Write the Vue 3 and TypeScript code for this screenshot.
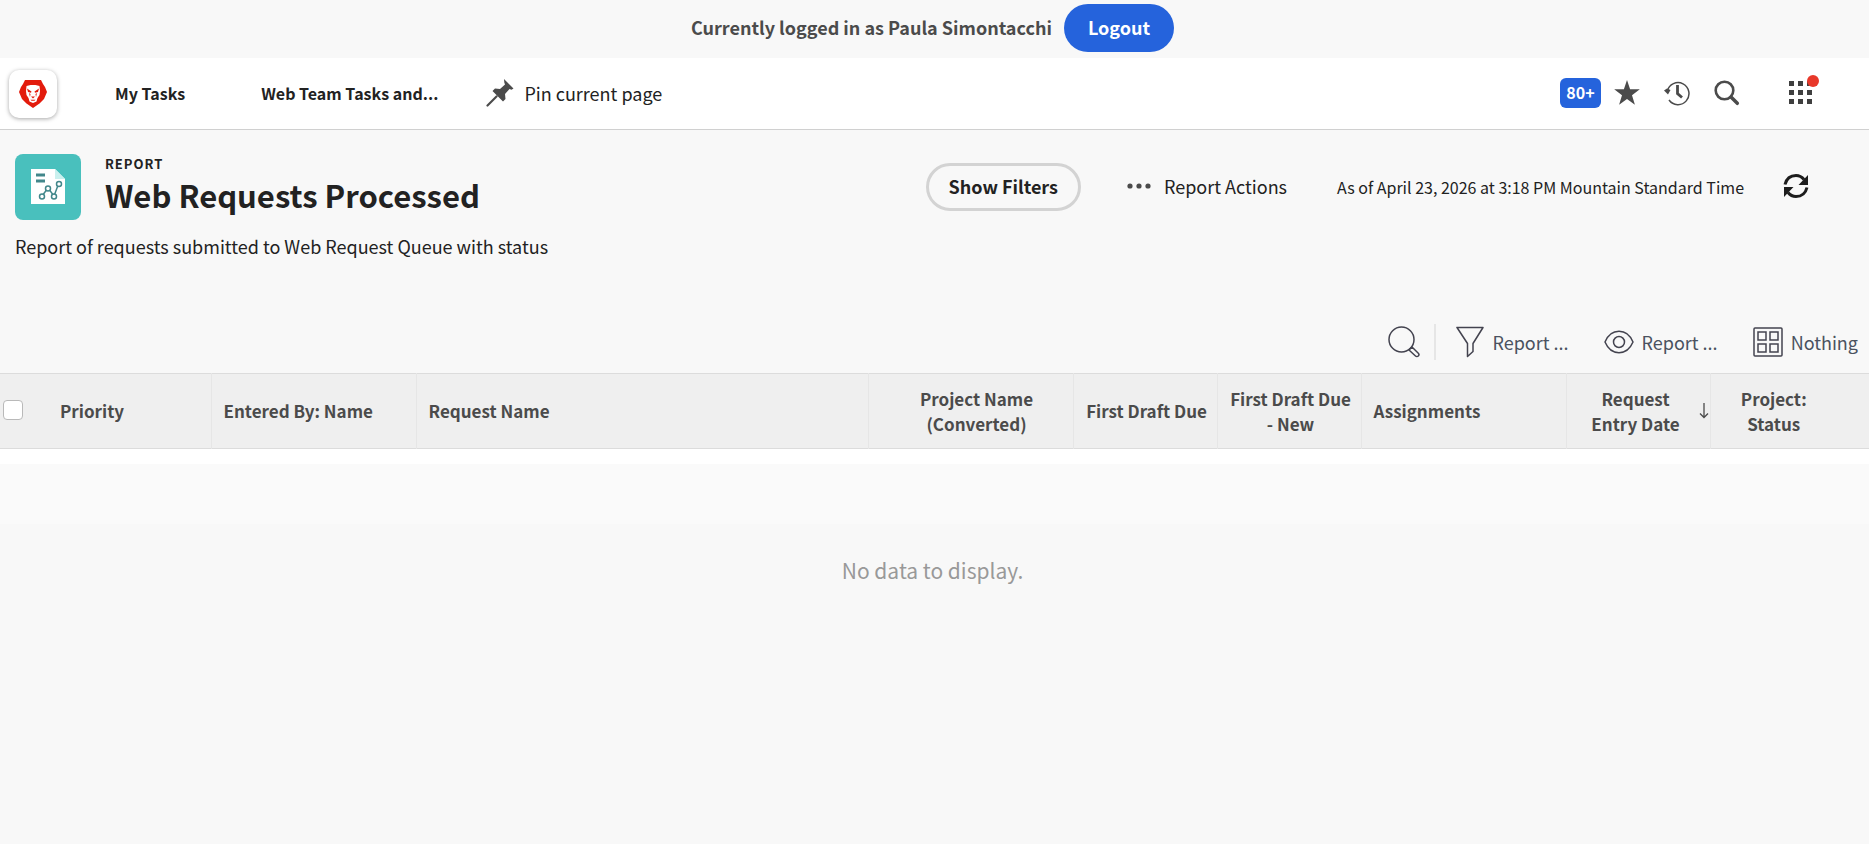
<script setup lang="ts">
interface Column {
  label: string
  align: 'left' | 'center'
  cls: string
  sorted?: boolean
}

const columns: Column[] = [
  { label: 'Priority', align: 'left', cls: 'w-priority' },
  { label: 'Entered By: Name', align: 'left', cls: 'w-wide' },
  { label: 'Request Name', align: 'left', cls: 'w-auto' },
  { label: 'Project Name (Converted)', align: 'center', cls: 'w-wide narrow-text' },
  { label: 'First Draft Due', align: 'center', cls: 'w-date' },
  { label: 'First Draft Due - New', align: 'center', cls: 'w-date' },
  { label: 'Assignments', align: 'left', cls: 'w-wide' },
  { label: 'Request Entry Date', align: 'center', cls: 'w-date w-sorted', sorted: true },
  { label: 'Project: Status', align: 'center', cls: 'w-last' },
]

const gridDots = [0, 9, 18]
</script>

<template>
  <div class="page">
    <div class="session-bar">
      <span class="session-text">Currently logged in as Paula Simontacchi</span>
      <button class="logout" type="button">Logout</button>
    </div>

    <header class="nav">
      <a class="brand" href="#" aria-label="Home">
        <svg width="28" height="28" viewBox="0 0 28 28">
          <path d="M6 0h16l2 4 2 3 2 5-3 7-4.500 4.500L14 28l-6.500-4.500L3 19l-3-7 2-5 2-3z" fill="#e31b0c" />
          <path d="M7.500 6l4-1h5l4 1 .5 5-.5 4-2 3-1 3.500L14 23l-3.500-1.500-1-3.500-2-3-.5-4z" fill="#fff" />
          <path d="M8 8.500l4.500 3-.5 1.200-3-.7zM20 8.500l-4.500 3 .5 1.200 3-.7zM12 16.500h4l-2 2zM11.500 19.800h5l-1 1h-3zM10 13l1.500 1-.5 3zM18 13l-1.500 1 .5 3z" fill="#e31b0c" />
        </svg>
      </a>
      <nav class="links">
        <a class="nav-link" href="#">My Tasks</a>
        <a class="nav-link" href="#">Web Team Tasks and...</a>
      </nav>
      <button class="pin" type="button">
        <svg width="28" height="28" viewBox="0 0 28 28">
          <path d="M18 0l9.500 9.500-2 1.200-2-.7-4.500 5 .5 5-2.500 2.500L6.500 12l2.500-2.500 5 .5 5-4.500-.7-2z" fill="#4b4b4b" />
          <path d="M10.500 17.500L1.500 26.500" stroke="#4b4b4b" stroke-width="2.200" stroke-linecap="round" />
        </svg>
        <span>Pin current page</span>
      </button>

      <div class="nav-tools">
        <button class="badge" type="button">80+</button>
        <button class="icon-btn star" type="button" aria-label="Favorites">
          <svg width="26" height="26" viewBox="0 0 26 26"><path d="M13 0l3.100 9.200 9.700.1-7.800 5.900 2.900 9.500L13 19l-7.900 5.700L8 15.200.2 9.300l9.700-.1z" fill="#4b4b4b" /></svg>
        </button>
        <button class="icon-btn clock" type="button" aria-label="Recent">
          <svg width="26" height="26" viewBox="0 0 26 26" fill="none" stroke="#4b4b4b">
            <path d="M3.300 11A11 11 0 1 1 5 20" stroke-width="1.500" />
            <path d="M0 10.500L3 8.500l3.500 1.500-2.500 4.500z" fill="#4b4b4b" stroke="none" />
            <path d="M13.500 5v8.500l4.500 4" stroke-width="2.800" />
          </svg>
        </button>
        <button class="icon-btn find" type="button" aria-label="Search">
          <svg width="26" height="26" viewBox="0 0 26 26" fill="none" stroke="#4b4b4b">
            <circle cx="10.500" cy="10.500" r="8.800" stroke-width="2.600" />
            <path d="M17 17l6.300 6.300" stroke-width="3.500" stroke-linecap="round" />
          </svg>
        </button>
        <button class="icon-btn apps" type="button" aria-label="Applications">
          <svg width="23" height="23" viewBox="0 0 23 23" fill="#3f3f3f">
            <template v-for="y in gridDots" :key="y">
              <rect v-for="x in gridDots" :key="x" :x="x" :y="y" width="5" height="5" />
            </template>
          </svg>
          <span class="dot"></span>
        </button>
      </div>
    </header>

    <section class="report-head">
      <div class="report-row">
        <div class="report-icon">
          <svg width="34" height="36" viewBox="0 0 34 36">
            <path d="M0 0h24l10 10v25H0z" fill="#fff" />
            <path d="M24 0l10 10H24z" fill="#c9f0ee" />
            <path d="M5 6h9M5 12h9" stroke="#42878b" stroke-width="3" />
            <path d="M11 27l6-8 6 8 4.500-12" fill="none" stroke="#42878b" stroke-width="1.500" />
            <g fill="#fff" stroke="#42878b" stroke-width="1.500">
              <circle cx="11" cy="27.500" r="2.500" /><circle cx="17" cy="19.500" r="2.500" />
              <circle cx="23" cy="27.500" r="2.500" /><circle cx="28" cy="15" r="2.500" />
            </g>
          </svg>
        </div>
        <div class="titles">
          <div class="kicker">REPORT</div>
          <h1>Web Requests Processed</h1>
        </div>
        <div class="report-tools">
          <button class="filters" type="button">Show Filters</button>
          <button class="actions" type="button">
            <svg width="24" height="6" viewBox="0 0 24 6" fill="#4b4b4b"><circle cx="3" cy="3" r="2.600" /><circle cx="12" cy="3" r="2.600" /><circle cx="21" cy="3" r="2.600" /></svg>
            <span>Report Actions</span>
          </button>
          <span class="as-of">As of April 23, 2026 at 3:18 PM Mountain Standard Time</span>
          <button class="icon-btn refresh" type="button" aria-label="Refresh">
            <svg width="26" height="26" viewBox="0 0 26 26" fill="none" stroke="#1d1d1d" stroke-width="3">
              <path d="M2 11.500C3.500 5.500 8 2.500 13 2.500c3.500 0 6 1.500 8 4M24 14.500c-1.500 6-6 9-11 9-3.500 0-6-1.500-8-4" />
              <path d="M25 2v10h-9.500zM1 24V14h9.500z" fill="#1d1d1d" stroke="none" />
            </svg>
          </button>
        </div>
      </div>
      <p class="description">Report of requests submitted to Web Request Queue with status</p>
    </section>

    <div class="toolbar">
      <button class="tool find-tool" type="button" aria-label="Search list">
        <svg width="32" height="32" viewBox="0 0 32 32" fill="none" stroke="#43434f" stroke-width="1.500">
          <circle cx="13.500" cy="13.500" r="12.500" />
          <path d="M21 24l6.500 6a1.900 1.900 0 0 0 2.800-2.800L24 21z" stroke-linejoin="round" />
        </svg>
      </button>
      <button class="tool filter-tool" type="button">
        <svg width="28" height="32" viewBox="0 0 28 32" fill="none" stroke="#43434f" stroke-width="1.500" stroke-linejoin="round">
          <path d="M1 1.500h26L17 17.500v8L11.500 30.500v-13z" />
        </svg>
        <span>Report ...</span>
      </button>
      <button class="tool view-tool" type="button">
        <svg width="30" height="24" viewBox="0 0 30 24" fill="none" stroke="#43434f" stroke-width="1.500">
          <path d="M1 12C4 5 9 1.300 15 1.300S26 5 29 12c-3 7-8 10.700-14 10.700S4 19 1 12z" />
          <circle cx="15" cy="12" r="5.500" />
        </svg>
        <span>Report ...</span>
      </button>
      <button class="tool group-tool" type="button">
        <svg width="30" height="30" viewBox="0 0 30 30" fill="none" stroke="#43434f" stroke-width="1.500">
          <rect x="1" y="1" width="28" height="28" rx="1" />
          <path d="M5 5h8v8H5zM17 5h8v8h-8zM5 17h8v8H5zM17 17h8v8h-8z" />
        </svg>
        <span>Nothing</span>
      </button>
    </div>

    <table class="grid">
      <thead>
        <tr>
          <th class="w-check"><input type="checkbox" aria-label="Select all" /></th>
          <th v-for="c in columns" :key="c.label" scope="col" :class="[c.cls, c.align]">
            <div class="th-inner">
              <span class="th-label">{{ c.label }}</span>
              <svg v-if="c.sorted" width="10" height="16" viewBox="0 0 10 16" fill="none" stroke="#4b4b4b" stroke-width="1.300"><path d="M5 0v14.500M1 10.500l4 4 4-4" /></svg>
            </div>
          </th>
        </tr>
      </thead>
    </table>
    <div class="gap-row"></div>
    <div class="alt-row"></div>
    <p class="empty">No data to display.</p>
  </div>
</template>

<style>
body {
  margin: 0;
  background: #f8f8f8;
}
</style>

<style scoped>
.page {
  font-family: "Noto Sans CJK SC", "Noto Sans", sans-serif;
  font-size: 18px;
  line-height: 24px;
  color: #222;
}
.page * {
  box-sizing: border-box;
}
button {
  font: inherit;
  color: inherit;
  background: none;
  border: 0;
  padding: 0;
  white-space: nowrap;
}
a {
  color: inherit;
  text-decoration: none;
}
svg {
  display: block;
  flex: none;
}
.session-bar {
  display: flex;
  justify-content: center;
  align-items: center;
  gap: 12px;
  height: 58px;
  padding: 0 4px 2px 0;
}
.session-text {
  padding-bottom: 2px;
  font-weight: 700;
  color: #4b4b4b;
}
.logout {
  height: 48px;
  padding: 0 24px 2px;
  border-radius: 24px;
  background: #2563dc;
  color: #fff;
  font-weight: 700;
}
.nav {
  display: flex;
  align-items: center;
  height: 72px;
  background: #fff;
  border-bottom: 1px solid #d0d0d0;
  padding: 0 57px 0 9px;
}
.brand {
  display: flex;
  align-items: center;
  justify-content: center;
  width: 48px;
  height: 48px;
  border-radius: 10px;
  background: #fff;
  box-shadow: 0 1px 4px rgba(0, 0, 0, 0.35);
}
.links {
  display: flex;
  margin-left: 58px;
  gap: 76px;
  padding-bottom: 2px;
  font-size: 16px;
  font-weight: 700;
}
.nav-link {
  white-space: nowrap;
}
.pin {
  display: flex;
  align-items: center;
  gap: 10px;
  margin-left: 48px;
  padding-bottom: 2px;
}
.nav-tools {
  display: flex;
  align-items: center;
  margin-left: auto;
  padding-bottom: 2px;
}
.badge {
  width: 41px;
  height: 30px;
  padding-bottom: 2px;
  border-radius: 6px;
  background: #2563dc;
  color: #fff;
  font-size: 16px;
  font-weight: 700;
}
.star {
  margin-left: 13px;
}
.clock,
.find {
  margin-left: 24px;
}
.apps {
  position: relative;
  margin-left: 49px;
}
.dot {
  position: absolute;
  top: -6px;
  right: -7px;
  width: 12px;
  height: 12px;
  border-radius: 50%;
  background: #e8382a;
}
.report-head {
  padding: 24px 60px 0 15px;
}
.report-row {
  display: flex;
  align-items: center;
}
.report-icon {
  display: flex;
  align-items: center;
  justify-content: center;
  width: 66px;
  height: 66px;
  border-radius: 8px;
  background: #49c0bd;
}
.titles {
  margin-left: 24px;
  padding-bottom: 2px;
}
.kicker {
  font-size: 13px;
  line-height: 18px;
  font-weight: 700;
  letter-spacing: 1px;
}
h1 {
  margin: 0;
  font-size: 31px;
  line-height: 44px;
  font-weight: 700;
}
.report-tools {
  display: flex;
  align-items: center;
  margin-left: auto;
}
.filters {
  height: 48px;
  padding: 0 20px 2px;
  border: 3px solid #d3d3d3;
  border-radius: 24px;
  font-weight: 700;
}
.actions {
  display: flex;
  align-items: center;
  gap: 13px;
  margin-left: 46px;
  padding-bottom: 2px;
}
.as-of {
  margin-left: 50px;
  font-size: 16px;
  white-space: nowrap;
}
.refresh {
  margin-left: 39px;
  padding-bottom: 2px;
}
.description {
  margin: 14px 0 0;
}
.toolbar {
  display: flex;
  justify-content: flex-end;
  align-items: center;
  height: 36px;
  margin: 66px 11px 13px 0;
  color: #4a5260;
}
.tool {
  display: flex;
  align-items: center;
  gap: 8px;
}
.find-tool {
  height: 36px;
  padding-right: 14px;
  border-right: 2px solid #e6e6e6;
}
.filter-tool {
  margin-left: 20px;
}
.view-tool,
.group-tool {
  margin-left: 35px;
}
.grid {
  width: 100%;
  table-layout: fixed;
  border-collapse: collapse;
  background: #efefef;
  color: #4b4b4b;
  font-size: 17px;
}
.grid tr {
  height: 75px;
  border-top: 1px solid #dcdcdc;
  border-bottom: 1px solid #dcdcdc;
}
th {
  padding: 0 0 1px 12px;
  font-weight: 700;
  line-height: 25px;
  text-align: left;
  border-right: 1px solid #e6e6e6;
}
th.w-check,
th.w-last {
  border-right: 0;
}
.th-inner {
  display: flex;
  align-items: center;
  gap: 6px;
}
.th-label {
  flex: 1;
}
th.center {
  text-align: center;
}
.w-check {
  width: 48px;
  padding: 0 0 2px 3px;
}
.w-priority {
  width: 163px;
}
.w-wide {
  width: 205px;
}
.narrow-text {
  padding: 0 30px 1px 42px;
}
.w-date {
  width: 144px;
  padding: 0 8px 1px 11px;
}
.w-sorted {
  padding: 0 1px 1px 12px;
}
.w-last {
  width: 159px;
  padding: 0 44px 1px 12px;
}
input[type='checkbox'] {
  appearance: none;
  display: block;
  width: 20px;
  height: 20px;
  margin: 0;
  border: 1px solid #b9b9b9;
  border-radius: 4px;
  background: #fff;
}
.gap-row {
  height: 15px;
  background: #fff;
}
.alt-row {
  height: 60px;
  background: #fafafa;
}
.empty {
  margin: 30px 4px 0 0;
  font-size: 21px;
  line-height: 32px;
  text-align: center;
  color: #999;
}
</style>
